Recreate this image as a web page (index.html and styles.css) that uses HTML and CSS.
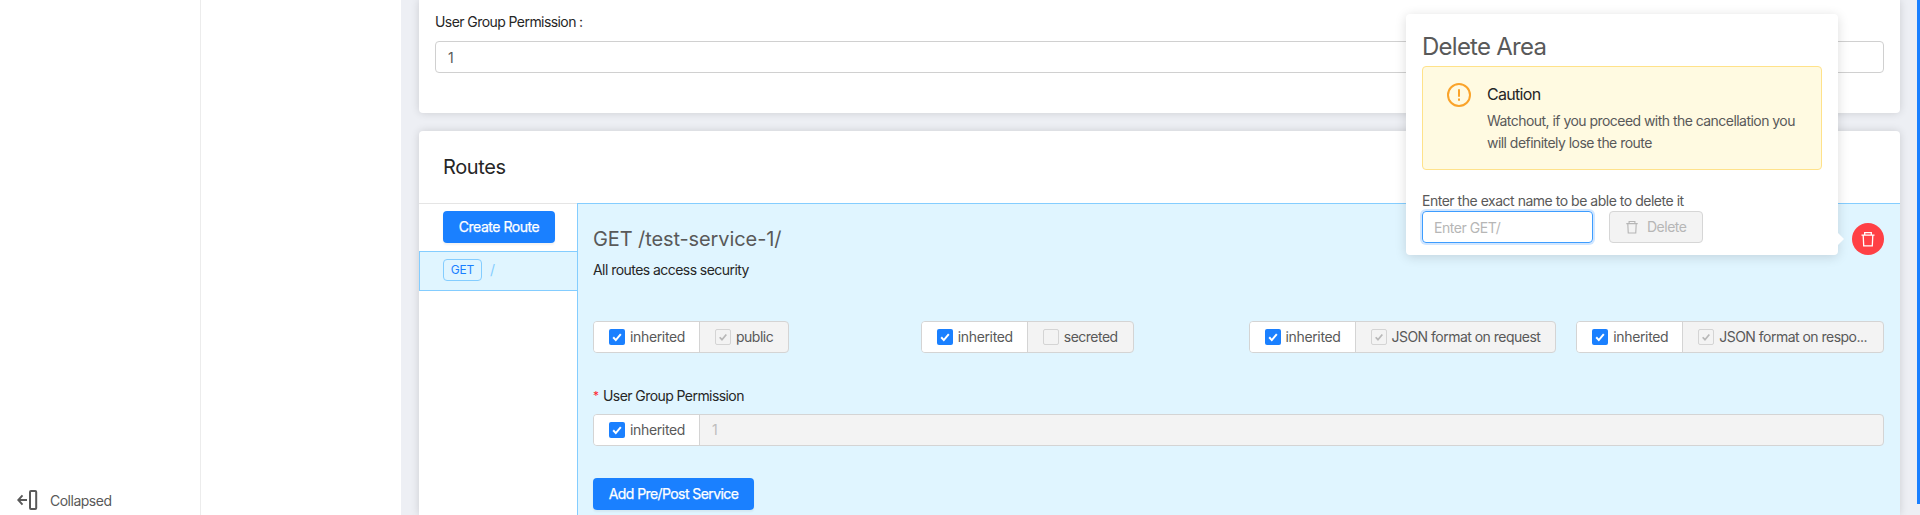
FILE: index.html
```html
<!DOCTYPE html>
<html lang="en">
<head>
<meta charset="utf-8">
<title>Routes</title>
<link rel="stylesheet" href="styles.css">
</head>
<body>
<svg width="0" height="0" class="defs">
  <symbol id="trash" viewBox="0 0 16 16"><path d="M1.500 4.200h13M3.200 4.200l.5 10.600h8.600l.5-10.600M4.700 4.200V1.700h6.600v2.500" fill="none" stroke="currentColor" stroke-width="1.300"/></symbol>
  <symbol id="check" viewBox="0 0 16 16"><path d="M4.200 8.300l2.600 2.800 5-6" fill="none" stroke="currentColor" stroke-width="2"/></symbol>
</svg>
<div class="app">
  <aside class="side">
    <div class="collapse">
      <svg class="collapse-icon" width="21" height="20" viewBox="0 0 21 20"><path d="M10 10H1.500M5.500 5.300L1.200 10l4.300 4.700" fill="none" stroke="currentColor" stroke-width="1.900"/><rect x="13" y="1" width="6.200" height="18" rx="1" fill="none" stroke="currentColor" stroke-width="2"/></svg>
      <span class="t-collapsed">Collapsed</span>
    </div>
  </aside>
  <aside class="side second"></aside>
  <main class="main">
    <section class="card permissions">
      <label class="label"><span class="t-ugp">User Group Permission</span><span class="colon">:</span></label>
      <div class="input">1</div>
    </section>
    <section class="card routes">
      <header class="card-head">Routes</header>
      <div class="card-body">
        <nav class="nav">
          <div class="btn create"><span class="t-create">Create Route</span></div>
          <div class="nav-item"><span class="tag">GET</span><span class="slash">/</span></div>
        </nav>
        <div class="detail">
          <div class="detail-head">
            <h2 class="detail-title">GET /test-service-1/</h2>
            <div class="round">
              <svg width="16" height="16"><use href="#trash"/></svg>
              <div class="popover">
                <h1 class="pop-title">Delete Area</h1>
                <div class="alert">
                  <svg class="alert-icon" width="24" height="24" viewBox="0 0 24 24"><circle cx="12" cy="12" r="11" fill="none" stroke="#faa32a" stroke-width="2"/><path d="M12 6.200v7.600M12 15.600v2.200" stroke="#faa32a" stroke-width="2"/></svg>
                  <div>
                    <div class="alert-title">Caution</div>
                    <div class="alert-text">Watchout, if you proceed with the cancellation you<br>will definitely lose the route</div>
                  </div>
                </div>
                <div class="pop-label">Enter the exact name to be able to delete it</div>
                <div class="pop-row">
                  <div class="pop-input"><span>Enter GET/</span></div>
                  <div class="pop-delete"><svg width="14" height="14"><use href="#trash"/></svg><span>Delete</span></div>
                </div>
              </div>
            </div>
          </div>
          <div class="subtitle">All routes access security</div>
          <div class="grid">
            <div class="group">
              <span class="cell on"><i class="box checked"><svg width="16" height="16"><use href="#check"/></svg></i><b>inherited</b></span>
              <span class="cell off"><i class="box"><svg width="14" height="14"><use href="#check"/></svg></i><b class="tight">public</b></span>
            </div>
            <div class="group">
              <span class="cell on"><i class="box checked"><svg width="16" height="16"><use href="#check"/></svg></i><b>inherited</b></span>
              <span class="cell off"><i class="box"></i><b class="tight">secreted</b></span>
            </div>
            <div class="group fill">
              <span class="cell on"><i class="box checked"><svg width="16" height="16"><use href="#check"/></svg></i><b>inherited</b></span>
              <span class="cell off"><i class="box"><svg width="14" height="14"><use href="#check"/></svg></i><b class="json">JSON format on request</b></span>
            </div>
            <div class="group fill">
              <span class="cell on"><i class="box checked"><svg width="16" height="16"><use href="#check"/></svg></i><b>inherited</b></span>
              <span class="cell off"><i class="box"><svg width="14" height="14"><use href="#check"/></svg></i><b class="json">JSON format on respo...</b></span>
            </div>
          </div>
          <label class="label required"><span class="star">*</span><span class="t-ugp">User Group Permission</span></label>
          <div class="group wide">
            <span class="cell on"><i class="box checked"><svg width="16" height="16"><use href="#check"/></svg></i><b>inherited</b></span>
            <span class="cell value">1</span>
          </div>
          <div class="btn add"><span class="t-add">Add Pre/Post Service</span></div>
        </div>
      </div>
    </section>
  </main>
  <div class="rail"></div>
</div>
</body>
</html>
```
FILE: styles.css
```css
* { box-sizing: border-box; }
body {
  margin: 0;
  height: 515px;
  overflow: hidden;
  font: 14px/22px Inter, "Liberation Sans", sans-serif;
  letter-spacing: -0.35px;
  color: #595959;
  background: #edeff4;
  white-space: nowrap;
}
.defs { display: none; }
svg { display: block; flex: none; }
.app { display: flex; height: 515px; overflow: hidden; }
.side {
  flex: none;
  width: 201px;
  background: #fff;
  border-right: 1px solid #ececec;
  display: flex;
  align-items: flex-end;
}
.side.second { width: 200px; border: 0; }
.collapse { display: flex; align-items: center; padding: 0 0 3px 17px; }
.collapse span { margin-left: 12px; margin-top: 2px; letter-spacing: -.5px; }
.main { flex: 1; padding: 0 17px 0 18px; }
.card {
  background: #fff;
  border-radius: 4px;
  box-shadow: 0 0 8px rgba(0, 0, 0, .14);
}
.permissions { height: 113px; padding: 11px 16px 0; border-radius: 0 0 4px 4px; }
.label { display: block; color: #262626; }
.t-ugp { letter-spacing: -.57px; }
.colon { margin-left: 3px; }
.input {
  height: 32px;
  margin-top: 8px;
  border: 1px solid #d0d0d0;
  border-radius: 4px;
  padding: 5px 12px;
}
.routes { margin-top: 18px; height: 384px; border-radius: 4px 4px 0 0; }
.card-head {
  height: 73px;
  padding: 22px 24px;
  border-bottom: 1px solid #e5e5e5;
  margin-bottom: -1px;
  font-size: 20px;
  line-height: 28px;
  letter-spacing: -0.4px;
  color: #262626;
}
.card-body { display: flex; height: 312px; }
.nav { width: 158px; flex: none; padding-top: 8px; }
.btn {
  display: flex;
  align-items: center;
  justify-content: center;
  width: max-content;
  height: 32px;
  border-radius: 4px;
  background: #1a80ff;
  color: #fff;
  box-shadow: 0 2px 2px rgba(0, 0, 0, .05);
  -webkit-text-stroke: .25px #fff;
}
.create { width: 112px; margin-left: 24px; letter-spacing: -.45px; }
.nav-item {
  display: flex;
  align-items: center;
  height: 40px;
  margin-top: 8px;
  padding: 0 0 2px 23px;
  background: #e0f5ff;
  border: 1px solid #84cdff;
  border-right: 0;
}
.tag {
  width: 39px;
  height: 22px;
  border: 1px solid #84cdff;
  border-radius: 4px;
  text-align: center;
  font-size: 12px;
  line-height: 20px;
  color: #1a80ff;
  letter-spacing: -.2px;
}
.slash { margin-left: 8px; color: #84cdff; }
.detail {
  flex: 1;
  min-width: 0;
  padding: 19px 16px 0 15px;
  background: #e0f5ff;
  border: 1px solid #84cdff;
  border-width: 1px 0 0 1px;
}
.detail-head { display: flex; justify-content: space-between; align-items: center; height: 32px; }
.detail-title { margin: 0; font-size: 20px; line-height: 32px; font-weight: 400; letter-spacing: -.1px; }
.round {
  position: relative;
  display: flex;
  align-items: center;
  justify-content: center;
  width: 32px;
  height: 32px;
  border-radius: 50%;
  background: #ff4045;
  color: #fff;
}
.popover {
  position: absolute;
  right: 46px;
  top: -209px;
  width: 432px;
  height: 241px;
  padding: 16px 16px 0;
  border-radius: 4px;
  background: #fff;
  color: #595959;
  box-shadow: 0 2px 12px rgba(0, 0, 0, .14);
}
.popover::after {
  content: "";
  position: absolute;
  right: -6px;
  bottom: 10px;
  border: 6px solid transparent;
  border-left-color: #fff;
  border-right: 0;
}
.pop-title { margin: 0; height: 36px; font-size: 24px; line-height: 33px; font-weight: 400; letter-spacing: -.75px; }
.alert {
  display: flex;
  gap: 16px;
  height: 104px;
  padding: 15px 24px 0;
  background: #fffae1;
  border: 1px solid #ffe28a;
  border-radius: 4px;
}
.alert-icon { margin-top: 1px; }
.alert-title { height: 28px; font-size: 16px; line-height: 24px; letter-spacing: -.7px; color: #262626; }
.alert-text { letter-spacing: -.54px; }
.pop-label { margin-top: 20px; letter-spacing: -.48px; }
.pop-row { display: flex; gap: 16px; margin-top: -1px; }
.pop-input {
  width: 171px;
  height: 32px;
  padding: 5px 11px;
  border: 1px solid #3d9dff;
  border-radius: 4px;
  color: #b6b6b6;
  box-shadow: 0 0 0 2px #d1e6ff;
  letter-spacing: -.45px;
}
.pop-delete {
  display: flex;
  align-items: center;
  gap: 8px;
  width: 94px;
  height: 32px;
  padding-left: 15px;
  border: 1px solid #d6d6d6;
  border-radius: 4px;
  background: #f3f3f3;
  color: #b6b6b6;
  letter-spacing: -.5px;
}
.subtitle { margin-top: 4px; line-height: 22px; letter-spacing: -.55px; color: #262626; }
.grid { display: grid; grid-template-columns: repeat(4, minmax(0, 1fr)); gap: 20px; margin-top: 40px; }
.group {
  display: flex;
  width: max-content;
  height: 32px;
  border: 1px solid #d4d4d4;
  border-radius: 4px;
  background: #f3f3f3;
  overflow: hidden;
}
.group b { font-weight: 400; }
.group .json { letter-spacing: -.52px; }
.group .tight { letter-spacing: -.5px; }
.cell { display: flex; align-items: center; gap: 5px; padding: 0 15px; }
.cell.on { flex: none; width: 106px; background: #fff; border-right: 1px solid #d4d4d4; }
.box {
  flex: none;
  width: 16px;
  height: 16px;
  border: 1px solid #d4d4d4;
  border-radius: 2px;
  color: #b8b8b8;
}
.box.checked { border: 0; background: #1a80ff; color: #fff; }
.required { display: flex; margin-top: 32px; }
.star { width: 10px; color: #ff2530; font-size: 12px; }
.group.fill, .group.wide { width: 100%; }
.group.wide { margin-top: 7px; }
.value { padding: 0 12px; color: #bdbdbd; }
.add { width: 161px; margin-top: 32px; letter-spacing: -.58px; }
.rail { width: 3px; height: 504px; background: #1a80ff; }
```
